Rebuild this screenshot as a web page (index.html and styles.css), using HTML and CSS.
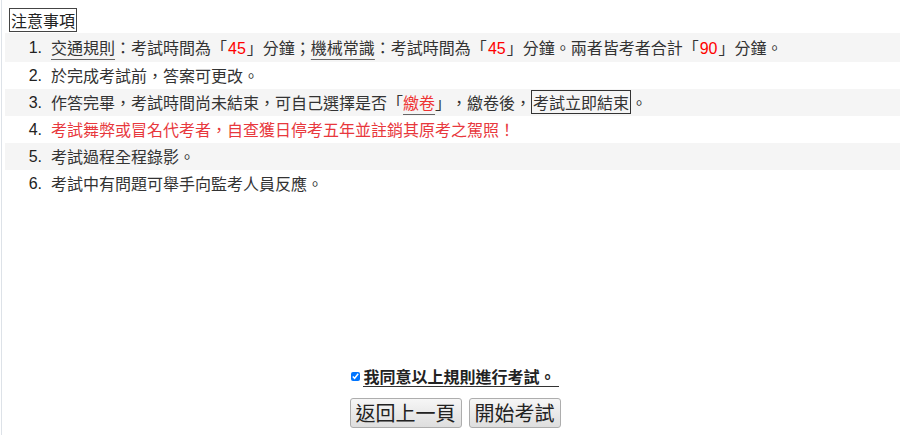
FILE: index.html
```html
<!DOCTYPE html>
<html lang="zh-TW">
<head>
    <meta charset="UTF-8">
    <meta name="viewport" content="width=device-width, initial-scale=1.0">
    <title>注意事項</title>
    <link rel="stylesheet" href="styles.css">
</head>
<body>

    <div class="page">
        <div class="notice">
            <span class="notice-title">注意事項</span>
            <ol class="rules">
                <li class="rule odd"><span class="num">1.</span><span class="txt"><u>交通規則</u>：考試時間為「<em>45</em>」分鐘；<u>機械常識</u>：考試時間為「<em>45</em>」分鐘。兩者皆考者合計「<em>90</em>」分鐘。</span></li>
                <li class="rule"><span class="num">2.</span><span class="txt">於完成考試前，答案可更改。</span></li>
                <li class="rule odd"><span class="num">3.</span><span class="txt">作答完畢，考試時間尚未結束，可自己選擇是否「<u class="red">繳卷</u>」，繳卷後，<span class="boxed">考試立即結束</span>。</span></li>
                <li class="rule warn"><span class="num">4.</span><span class="txt">考試舞弊或冒名代考者，自查獲日停考五年並註銷其原考之駕照！</span></li>
                <li class="rule odd"><span class="num">5.</span><span class="txt">考試過程全程錄影。</span></li>
                <li class="rule"><span class="num">6.</span><span class="txt">考試中有問題可舉手向監考人員反應。</span></li>
            </ol>
        </div>

        <div class="agree">
            <label class="agree-label"><input type="checkbox" checked><span>我同意以上規則進行考試。</span></label>
            <div class="actions">
                <button type="button">返回上一頁</button>
                <button type="button">開始考試</button>
            </div>
        </div>
    </div>

</body>
</html>
```

FILE: styles.css
```css
html, body {
    margin: 0;
    height: 100%;
}
body {
    font-family: "Noto Sans CJK TC", "Liberation Sans", sans-serif;
    color: #333;
    background: #fff;
    text-spacing-trim: space-all;
}
.page {
    height: 435px;
    margin-left: 1px;
    border-left: 1px solid #dde2e8;
    padding-left: 3px;
    display: flex;
    flex-direction: column;
    box-sizing: border-box;
}
.notice {
    flex: 1;
    padding-top: 8px;
}
.notice-title {
    display: inline-block;
    margin-left: 4px;
    border: 1px solid #444;
    font-size: 16px;
    line-height: 22px;
    padding: 0 1px;
    color: #222;
}
.rules {
    list-style: none;
    margin: 1px 0 0;
    padding: 0;
}
.rule {
    display: flex;
    font-size: 16px;
    line-height: 27px;
    height: 27px;
}
.rule:first-child {
    height: 29px;
    line-height: 29px;
}
.rule.odd {
    background: #f5f5f5;
}
.rule .num {
    width: 37px;
    text-align: right;
    padding-right: 9px;
    color: #222;
    font-family: "Liberation Sans", sans-serif;
}
.rule em {
    font-style: normal;
    color: #f00;
    font-family: "Liberation Sans", sans-serif;
    padding: 0 1px;
}
.rule u {
    text-decoration-color: #666;
    text-underline-offset: 5px;
}
.rule u.red {
    color: #e33;
}
.rule.warn .txt {
    color: #e8383d;
}
.boxed {
    border: 1px solid #333;
    padding: 0 1px;
    line-height: 22px;
    display: inline-block;
}
.agree {
    display: flex;
    flex-direction: column;
    align-items: center;
    padding-bottom: 7px;
    padding-left: 5px;
}
.agree-label {
    font-size: 16px;
    font-weight: bold;
    color: #222;
    line-height: 20px;
    display: flex;
    align-items: center;
    margin-top: -3px;
}
.agree-label span {
    border-bottom: 1px solid #333;
    padding-right: 3px;
}
.agree-label input {
    width: 9px;
    height: 9px;
    margin: 0 3px 0 0;
}
.actions {
    display: flex;
    gap: 7px;
    margin-top: 11px;
}
.actions button {
    font-family: "Noto Sans CJK TC", sans-serif;
    font-size: 20px;
    line-height: 28px;
    padding: 0 5px;
    color: #222;
    background: linear-gradient(#f6f6f6, #dedede);
    border: 1px solid #adadad;
    border-radius: 3px;
}
```
